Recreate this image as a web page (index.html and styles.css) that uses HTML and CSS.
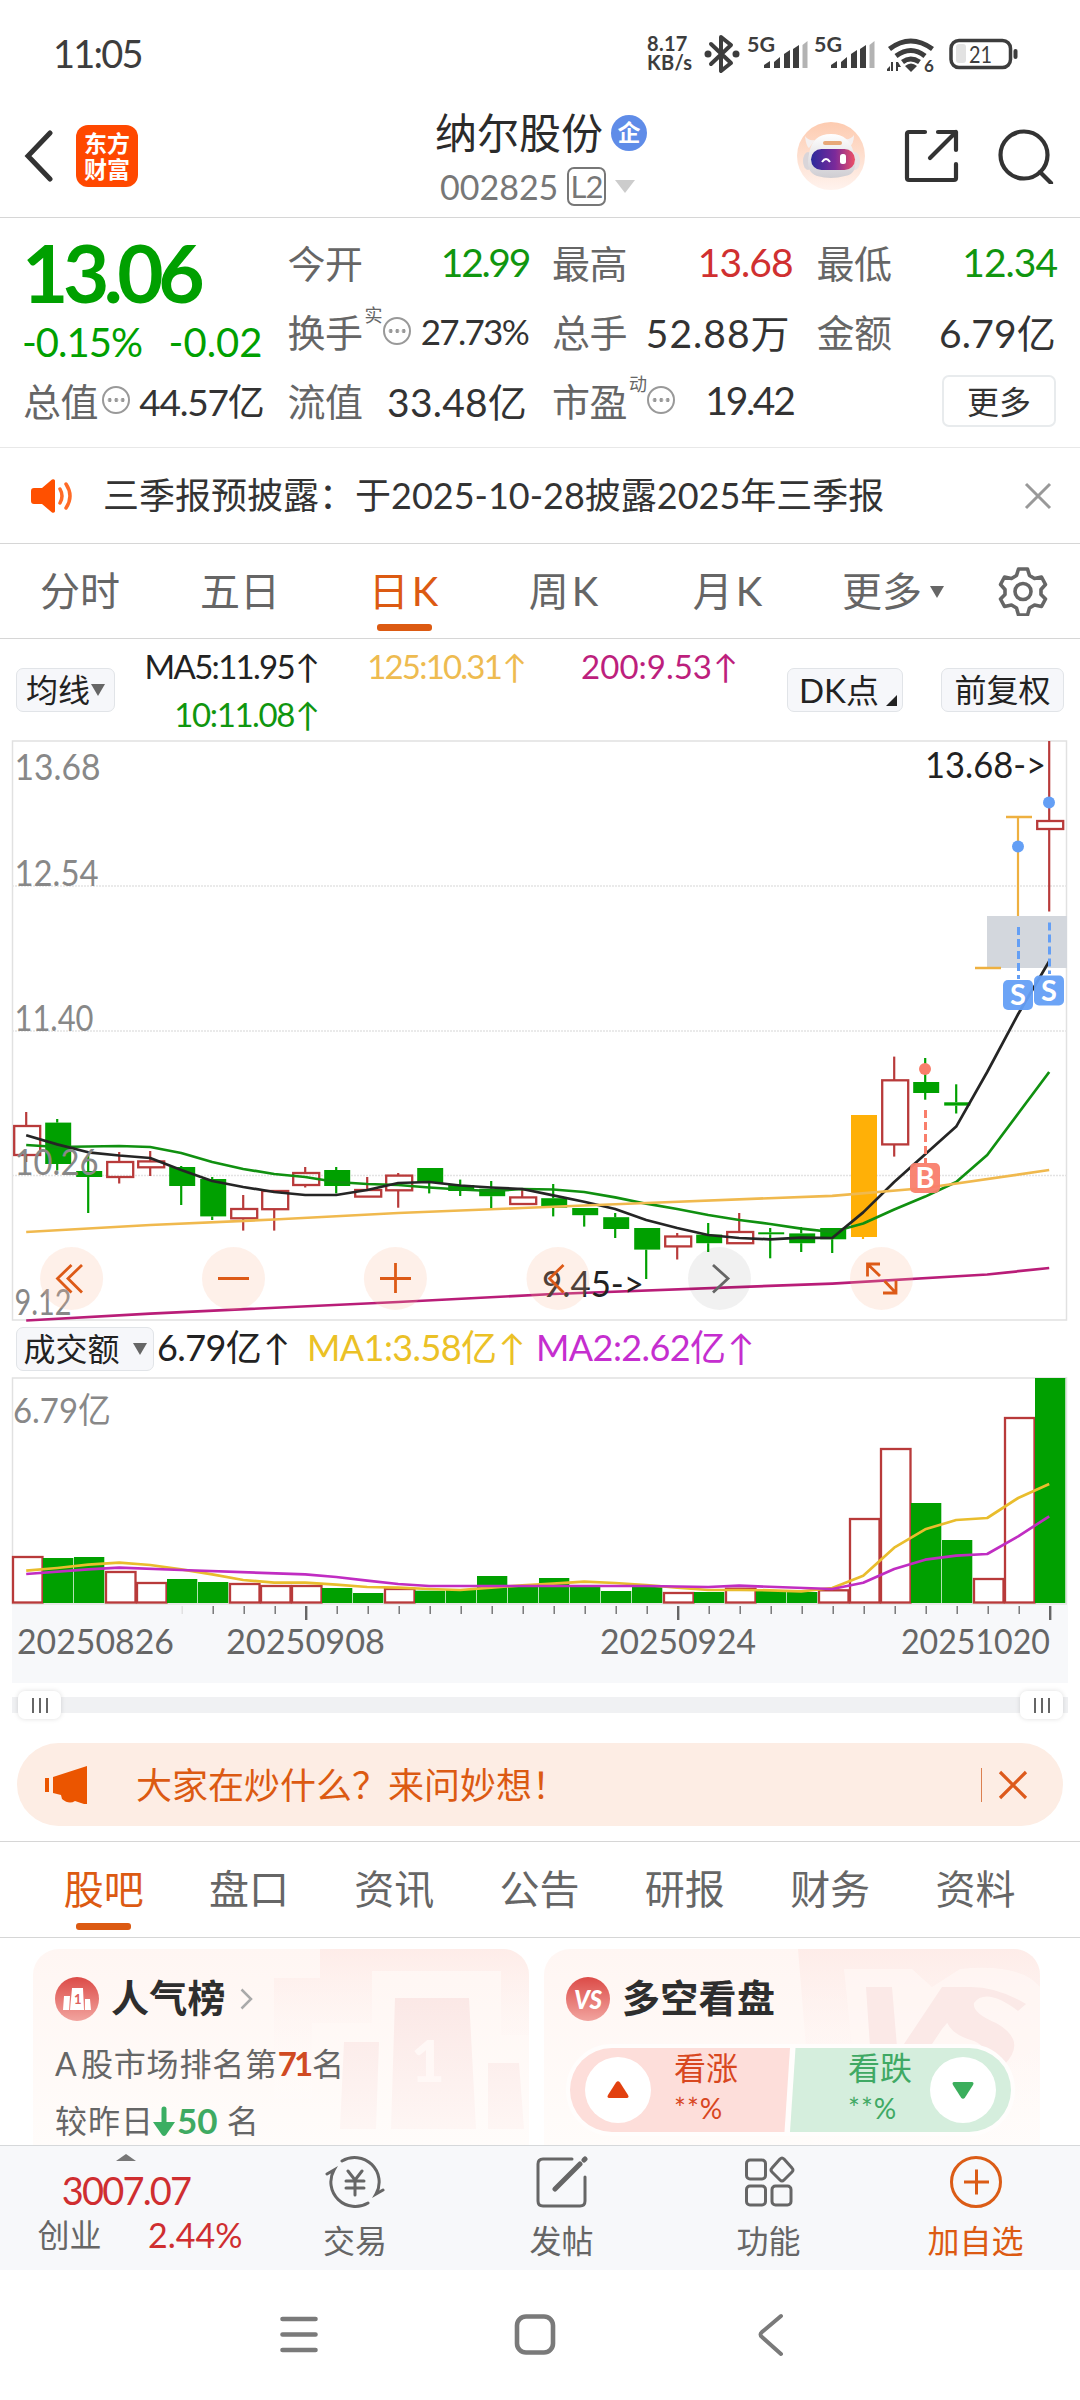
FILE: index.html
```html
<!DOCTYPE html>
<html lang="zh-CN">
<head>
<meta charset="utf-8">
<title>纳尔股份 002825</title>
<link rel="stylesheet" href="styles.css">
</head>
<body>
<div class="statusbar">
  <span class="clock">11:05</span>
  <div class="status-icons">
    <div class="speed"><span>8.17</span><span>KB/s</span></div>
    <svg class="status-svg" width="330" height="60" viewBox="700 20 330 60">
      <g fill="none" stroke="#3d3d3d" stroke-width="4" stroke-linejoin="round" stroke-linecap="round">
        <path d="M711 44l20 19-10 8V37l10 8-20 19"/>
        <rect x="951" y="40.500" width="59.500" height="27" rx="8" stroke-width="3.500"/>
        <path d="M1015.500 51v6"/>
      </g>
      <g fill="#3d3d3d">
        <circle cx="708" cy="54" r="3.500"/><circle cx="736" cy="54" r="3.500"/>
        <path d="M764 68v-3l6-4v7zM774 68V62l6-5v11zM784 68V54l6-4v18zM793 68V49l6-4v23z"/>
        <path d="M831 68v-3l6-4v7zM841 68V62l6-5v11zM851 68V54l6-4v18zM860 68V49l6-4v23z"/>
        <path d="M905 66q6-5 12 0l-6 6z"/>
        <path d="M890 66v5h-3v-2zM891 62h2v9h-2zM896 62h2v9h-2zM898 62l3 5h-3z"/>
      </g>
      <path d="M802.500 68V45l5-4v27zM869.500 68V45l5-4v27z" fill="#b3b3b3"/>
      <g fill="none" stroke="#3d3d3d" stroke-width="5">
        <path d="M889.500 49q21-16 43 0M896 56q15-11 29 0M902.500 62q8-6 17 0"/>
      </g>
      <rect x="956" y="44" width="10" height="19" rx="3" fill="#e2e2e2"/>
      <g fill="#3d3d3d" font-weight="700">
        <text x="747" y="52" font-size="21" textLength="28" lengthAdjust="spacingAndGlyphs">5G</text>
        <text x="814" y="52" font-size="21" textLength="28" lengthAdjust="spacingAndGlyphs">5G</text>
        <text x="924" y="72" font-size="17">6</text>
        <text x="969" y="63" font-size="23" font-weight="400" textLength="23" lengthAdjust="spacingAndGlyphs">21</text>
      </g>
    </svg>
  </div>
</div>

<header class="header">
  <div class="header-left">
    <svg width="30" height="52" viewBox="0 0 30 52"><path d="M26 3L4 26l22 23" fill="none" stroke="#333" stroke-width="5" stroke-linecap="round"/></svg>
    <div class="logo"><span>东方</span><span>财富</span></div>
  </div>
  <div class="header-title">
    <div class="stock-name">纳尔股份<span class="badge-qi">企</span></div>
    <div class="stock-code"><span class="code">002825</span><span class="l2">L2</span><i class="tri-down light"></i></div>
  </div>
  <div class="header-right">
    <svg width="68" height="68" viewBox="0 0 68 68">
      <defs>
        <linearGradient id="peach" x1="0" y1="0" x2="0" y2="1"><stop offset="0" stop-color="#fdcbb0"/><stop offset="1" stop-color="#fff3ee"/></linearGradient>
        <linearGradient id="visor" x1="0" y1="0" x2="1" y2="0"><stop offset="0" stop-color="#2b2a9c"/><stop offset=".55" stop-color="#7c2a9a"/><stop offset="1" stop-color="#ee4f66"/></linearGradient>
        <linearGradient id="shell" x1="0" y1="0" x2="0" y2="1"><stop offset="0" stop-color="#fff"/><stop offset="1" stop-color="#cfcdd2"/></linearGradient>
      </defs>
      <circle cx="34" cy="34" r="34" fill="url(#peach)"/>
      <path d="M8 14q1 10 4 12l6-8q-7 1-10-4zM57 13q0 9-5 12l-5-8q7 1 10-4z" fill="#f5f0f0"/>
      <ellipse cx="11" cy="39" rx="5" ry="9" fill="#d9d5d9"/><ellipse cx="58" cy="39" rx="5" ry="9" fill="#e9e1e3"/>
      <path d="M12 32q3-20 22-20t23 20q5 20-9 22-14 4-28 0-12-4-8-22z" fill="url(#shell)"/>
      <rect x="26" y="19" width="19" height="4" rx="2" fill="#e8a878"/>
      <rect x="14" y="27" width="44" height="21" rx="10.500" fill="url(#visor)"/>
      <path d="M25 40q4-6 8 0" fill="none" stroke="#fff" stroke-width="2"/><rect x="43" y="32" width="6" height="10" rx="2.500" fill="#fff"/>
    </svg>
    <svg width="56" height="56" viewBox="0 0 56 56" fill="none" stroke="#333" stroke-width="4.200" stroke-linecap="round" stroke-linejoin="round"><path d="M22 4H6q-2 0-2 2v44q0 2 2 2h45q2 0 2-2V36M35 4h18v18M53 4L27 30"/></svg>
    <svg width="56" height="56" viewBox="0 0 56 56" fill="none" stroke="#333" stroke-width="4.200" stroke-linecap="round"><circle cx="26" cy="27" r="23.500"/><path d="M42 44l11 11"/></svg>
  </div>
</header>

<section class="quote">
  <div class="price-block">
    <div class="price">13.06</div>
    <div class="change"><span>-0.15%</span><span>-0.02</span></div>
  </div>
  <div class="cell"><label>今开</label><b class="down tight">12.99</b></div>
  <div class="cell"><label>最高</label><b class="rise">13.68</b></div>
  <div class="cell"><label>最低</label><b class="down">12.34</b></div>
  <div class="cell"><label>换手<sup>实</sup><i class="dots"></i></label><b class="small">27.73%</b></div>
  <div class="cell"><label>总手</label><b class="wide">52.88万</b></div>
  <div class="cell"><label>金额</label><b class="loose">6.79亿</b></div>
  <div class="cell"><label>总值<i class="dots near"></i></label><b class="mid">44.57亿</b></div>
  <div class="cell"><label>流值</label><b class="loose">33.48亿</b></div>
  <div class="cell"><label>市盈<sup>动</sup><i class="dots"></i></label><b class="tight">19.42</b></div>
  <div class="cell end"><button class="more">更多</button></div>
</section>

<section class="notice">
  <svg width="44" height="36" viewBox="0 0 44 36"><path d="M3 10h8L21 1.500q2-1 3 1v31q-1 2-3 1L11 26H3q-3 0-3-3V13q0-3 3-3z" fill="#ff5000"/><path d="M29 11q4 7 0 14M35 6q8 12 0 24" fill="none" stroke="#ff6a26" stroke-width="3.500" stroke-linecap="round"/></svg>
  <p>三季报预披露：于2025-10-28披露2025年三季报</p>
  <svg width="28" height="28" viewBox="0 0 28 28"><path d="M2 2l24 24M26 2L2 26" stroke="#999" stroke-width="3"/></svg>
</section>

<nav class="periods">
  <span>分时</span><span>五日</span><span class="active k">日K</span><span class="k">周K</span><span class="k">月K</span><span class="more-tab">更多<i class="tri-down dark"></i></span>
  <svg width="50" height="50" viewBox="0 0 50 50" fill="none" stroke="#666" stroke-width="3.600" stroke-linejoin="round"><path d="M20.500 3h9l2 6.500 5 3 7-1.500 4 7.500-4.500 5v5l4.500 4.500-4 7.500-7-1.500-5 3-2 7h-9l-2-7-5-3-7 1.500-4-7.500L7 28.500v-5L2.500 18.500l4-7.500 7 1.500 5-3z"/><circle cx="25" cy="25.500" r="8"/></svg>
</nav>

<section class="ma-row">
  <button class="chip avg">均线<i class="tri-down dark"></i></button>
  <div class="ma-grid">
    <span class="c-black">MA5:11.95<i class="up">↑</i></span><span class="c-gold">125:10.31<i class="up">↑</i></span><span class="c-magenta">200:9.53<i class="up">↑</i></span>
    <span class="c-green">10:11.08<i class="up">↑</i></span>
  </div>
  <button class="chip dk">DK点<i class="corner"></i></button>
  <button class="chip fq">前复权</button>
</section>

<svg class="chart" id="kline" width="1080" height="582" viewBox="0 740 1080 582"></svg>

<section class="vol-row">
  <button class="chip vol">成交额<i class="tri-down dark"></i></button>
  <span class="v1">6.79亿<i class="up">↑</i></span><span class="v2">MA1:3.58亿<i class="up">↑</i></span><span class="v3">MA2:2.62亿<i class="up">↑</i></span>
</section>

<svg class="chart" id="volume" width="1080" height="308" viewBox="0 1376 1080 308"></svg>

<div class="slider"><div class="handle"><i></i><i></i><i></i></div><div class="handle"><i></i><i></i><i></i></div></div>

<section class="banner">
  <svg width="44" height="38" viewBox="0 0 44 38" fill="#eb5500"><path d="M0 12h4v14H0zM8 11L42 0v38h-3l-9-3q-6 4-13-2l-1-4-8-2z"/></svg>
  <p>大家在炒什么？来问妙想！</p>
  <i class="bar"></i>
  <svg width="30" height="30" viewBox="0 0 30 30"><path d="M2 2l26 26M28 2L2 28" stroke="#dd5a1c" stroke-width="3.200"/></svg>
</section>

<nav class="sections"><span class="active">股吧</span><span>盘口</span><span>资讯</span><span>公告</span><span>研报</span><span>财务</span><span>资料</span></nav>

<main class="cards">
  <article class="card">
    <svg class="card-art" width="496" height="196" viewBox="0 0 496 196">
      <defs>
        <linearGradient id="tint" x1="0" y1="0" x2="0" y2="1"><stop offset="0" stop-color="#fde6e2" stop-opacity=".6"/><stop offset="1" stop-color="#fff" stop-opacity=".1"/></linearGradient>
        <linearGradient id="block" x1="0" y1="0" x2="0" y2="1"><stop offset="0" stop-color="#fbe8e6"/><stop offset="1" stop-color="#fef6f4"/></linearGradient>
        <linearGradient id="red" x1="0" y1="0" x2="0" y2="1"><stop offset="0" stop-color="#dc4b47"/><stop offset="1" stop-color="#f2a49f"/></linearGradient>
      </defs>
      <path d="M241 150V29h46V0h209v86h-28V22H339v52h-60v76z" fill="url(#tint)"/>
      <path d="M311 93h35l-3 87h-36zM362 49h74l7 131h-85zM455 114h31l5 66h-36z" fill="url(#block)"/>
      <text x="378" y="133" font-size="58" font-weight="900" fill="#fff8f6">1</text>
    </svg>
    <h2><svg width="44" height="44" viewBox="0 0 44 44"><circle cx="22" cy="22" r="22" fill="url(#red)"/><path d="M9 19h6l-1 14H8zM17 11h11l1 22H15zM30 22h5l1 11h-6z" fill="#fff"/><text x="19" y="27" font-size="13" font-weight="700" fill="#dd615c">1</text></svg><span>人气榜</span><svg class="chev" width="13" height="22" viewBox="0 0 13 22"><path d="M1.500 1.500L11 11l-9.500 9.500" fill="none" stroke="#aaa" stroke-width="2.500"/></svg></h2>
    <p class="rank"><span class="latin-a">A</span>股市场排名第<b>71</b>名</p>
    <p class="shift">较昨日<svg width="22" height="30" viewBox="0 0 22 30"><path d="M11 3v16" stroke="#3bae63" stroke-width="5" stroke-linecap="round"/><path d="M0 16h22L13 29q-2 2-4 0z" fill="#3bae63"/></svg><b>50</b> 名</p>
  </article>
  <article class="card">
    <svg class="card-art" width="496" height="196" viewBox="0 0 496 196">
      <path d="M254 0H496V196H270z" fill="url(#tint)"/>
      <path d="M300 20h68l20 18 28-18q60-6 80 18v60l-80 40H312z" fill="#fff7f4" opacity=".75"/>
      <path d="M322 38h26l5 60H326zM358 98l40-60h28l-6 16-22 26-12 18z" fill="#fbe9e7"/>
      <path d="M482 55q-30-18-58-17-25 6-22 32 3 15 28 22 14 6 6 14-10 8-30 0l-10 20q40 10 64-10 24-24-8-42-24-10-22-20 12-16 44 8z" fill="#fbe9e7"/>
    </svg>
    <h2><svg width="44" height="44" viewBox="0 0 44 44"><circle cx="22" cy="22" r="22" fill="url(#red)"/><text x="8" y="32" font-size="26" font-weight="900" font-style="italic" fill="#fff" textLength="28" lengthAdjust="spacingAndGlyphs">VS</text></svg><span>多空看盘</span></h2>
    <div class="vote">
      <div class="bull"><span class="knob"><svg width="22" height="18" viewBox="0 0 22 18"><path d="M9 1.500q2-2.500 4 0l8 12.500q1.500 3-1.500 3h-17q-3 0-1.500-3z" fill="#e2400f"/></svg></span><div><strong>看涨</strong><em>**%</em></div></div>
      <div class="bear"><div><strong>看跌</strong><em>**%</em></div><span class="knob"><svg width="22" height="18" viewBox="0 0 22 18"><path d="M9 16.500q2 2.500 4 0l8-12.500q1.500-3-1.500-3h-17q-3 0-1.500 3z" fill="#3bae5c"/></svg></span></div>
    </div>
  </article>
</main>

<footer class="toolbar">
  <div class="index"><i class="tri-up"></i><span class="idx-val">3007.07</span><div class="idx-row"><span>创业</span><span class="pct">2.44%</span></div></div>
  <div class="tool"><svg width="60" height="52" viewBox="0 0 60 52" fill="none" stroke="#666" stroke-width="3" stroke-linecap="round"><path d="M17 5a24.500 24.500 0 0 1 34 33l7-4M43 47A24.500 24.500 0 0 1 9 14l-7 4M23 15l7 9 7-9M30 24v15M21 25h18M21 32h18"/></svg><span>交易</span></div>
  <div class="tool"><svg width="52" height="52" viewBox="0 0 52 52" fill="none" stroke="#666" stroke-width="3" stroke-linecap="round" stroke-linejoin="round"><path d="M36 3H7q-5 0-5 5v37q0 5 5 5h37q5 0 5-5V21"/><path d="M19 33l25-25M48 4l1-1" stroke-width="5"/></svg><span>发帖</span></div>
  <div class="tool"><svg width="52" height="52" viewBox="0 0 52 52" fill="none" stroke="#666" stroke-width="3" stroke-linejoin="round"><rect x="3.500" y="4" width="19" height="19" rx="3.500"/><rect x="3.500" y="30" width="19" height="19" rx="3.500"/><rect x="29" y="30" width="19" height="19" rx="3.500"/><path d="M37 3q2-2 4 0l8 9q2 2 0 4l-8 8q-2 2-4 0l-8-8q-2-2 0-4z"/></svg><span>功能</span></div>
  <div class="tool add"><svg width="54" height="54" viewBox="0 0 54 54" fill="none" stroke="#db5c16" stroke-width="3"><circle cx="27" cy="27" r="24.500"/><path d="M15 27h25M27.500 14.500v25"/></svg><span>加自选</span></div>
</footer>

<div class="sysnav">
  <svg width="38" height="44" viewBox="0 0 38 44"><path d="M2.500 6h33M2.500 21.500h33M2.500 37h33" stroke="#7a7a7a" stroke-width="4.600" stroke-linecap="round"/></svg>
  <svg width="42" height="44" viewBox="0 0 42 44"><rect x="3" y="3.500" width="36" height="36" rx="9" fill="none" stroke="#7a7a7a" stroke-width="4.600"/></svg>
  <svg width="26" height="44" viewBox="0 0 26 44"><path d="M23 3L4 19q-3 2.500 0 5l19 17" fill="none" stroke="#7a7a7a" stroke-width="4" stroke-linecap="round"/></svg>
</div>
<script src="chart.js"></script>
</body>
</html>
```
FILE: styles.css
```css
* { box-sizing: border-box; }
body {
  margin: 0;
  width: 1080px;
  height: 2400px;
  overflow: hidden;
  background: #fff;
  color: #333;
  font-family: Lato, "Noto Sans CJK SC", sans-serif;
}
svg { display: block; flex: none; }
.chart { overflow: visible; }
svg text { font-family: Lato, "Noto Sans CJK SC", sans-serif; }
i, em { font-style: normal; }
p, h2 { margin: 0; }
button { font-family: inherit; padding: 0; white-space: nowrap; }

.tri-down { display: inline-block; border-left: 7px solid transparent; border-right: 7px solid transparent; border-top: 12px solid #666; }
.tri-down.light { border-left-width: 10px; border-right-width: 10px; border-top: 13px solid #ccc; margin-left: 9px; }
.tri-up { border-left: 10px solid transparent; border-right: 10px solid transparent; border-bottom: 7px solid #777; }

/* status bar */
.statusbar { height: 88px; padding: 20px 50px 0 53px; display: flex; justify-content: space-between; }
.clock { font-size: 38px; line-height: 67px; letter-spacing: -1.8px; color: #3d3d3d; }
.status-icons { display: flex; }
.speed { width: 53px; padding-top: 14px; display: flex; flex-direction: column; font-size: 20px; line-height: 19px; font-weight: 700; color: #3d3d3d; letter-spacing: .3px; }

/* header */
.header { height: 130px; border-bottom: 1px solid #d6d6d6; display: grid; grid-template-columns: 360px 360px 360px; }
.header-left { display: flex; align-items: center; padding: 6px 0 0 24px; gap: 22px; }
.logo { width: 62px; height: 62px; border-radius: 12px; background: #ff4800; color: #fff; display: flex; flex-direction: column; align-items: center; justify-content: center; font-size: 23px; line-height: 26px; font-weight: 700; }
.header-title { padding: 18px 0 0 75px; }
.stock-name { display: flex; align-items: center; height: 54px; font-size: 42px; line-height: 54px; white-space: nowrap; color: #2b2b2b; }
.badge-qi { margin-left: 8px; width: 36px; height: 36px; border-radius: 50%; background: #5f8ce8; color: #fff; font-size: 23px; line-height: 35px; text-align: center; font-weight: 700; }
.stock-code { display: flex; align-items: center; height: 52px; padding-left: 5px; color: #777; font-size: 34px; }
.code { width: 127px; }
.l2 { width: 39px; height: 39px; border: 2px solid #777; border-radius: 7px; font-size: 31px; line-height: 34px; text-align: center; letter-spacing: -1px; }
.header-right { display: flex; align-items: center; padding: 6px 0 0 77px; gap: 38px; }
.header-right svg:last-child { margin-left: 1px; }

/* quote */
.quote { height: 230px; border-bottom: 1px solid #e8e8e8; padding: 9px 23px 0 23px; display: grid; grid-template-columns: repeat(4, 239.500px); grid-template-rows: repeat(3, 69px); column-gap: 25px; }
.price-block { grid-row: span 2; color: #00a000; }
.price { margin-top: 5px; height: 81px; font-size: 80px; line-height: 80px; font-weight: 700; letter-spacing: -5.500px; margin-left: -1px; }
.change { display: flex; justify-content: space-between; height: 58px; line-height: 58px; font-size: 40px; letter-spacing: -1px; }
.change span:first-child { margin-left: -1px; }
.change span:last-child { letter-spacing: 0; }
.cell { display: flex; align-items: center; justify-content: space-between; font-size: 38px; white-space: nowrap; }
.cell.end { justify-content: flex-end; padding-top: 3px; }
.cell label { color: #666; position: relative; display: flex; align-items: center; height: 69px; letter-spacing: -.5px; }
.cell b { font-weight: 400; font-size: 39px; letter-spacing: -1px; margin-right: -1px; }
.cell .down { color: #10960f; }
.cell .rise { color: #d03030; }
.cell b.tight { letter-spacing: -2.300px; margin-right: -2px; }
.cell b.loose { letter-spacing: .2px; margin-right: 0; }
.cell b.wide { letter-spacing: 1px; margin-right: 1px; }
.cell b.small { font-size: 35px; letter-spacing: -1.700px; }
.cell b.mid { font-size: 37px; letter-spacing: -1.200px; }
.cell sup { position: absolute; left: 77px; top: 4px; font-size: 18px; line-height: 30px; }
.dots { width: 28px; height: 28px; margin-left: 20px; border: 2px solid #999; border-radius: 50%; background: radial-gradient(circle 2px, #999 90%, transparent) 2.500px 0 / 6.500px 24px; background-repeat: repeat-x; background-clip: content-box; padding: 0 2px; }
.dots.near { margin-left: 4px; }
.more { width: 114px; height: 52px; border: 2px solid #e8ebed; border-radius: 7px; background: #fff; font-size: 32px; line-height: 45px; color: #333; }

/* notice */
.notice { height: 96px; border-bottom: 1px solid #d6d6d6; display: flex; align-items: center; padding: 0 28px 0 31px; }
.notice p { flex: 1; margin: -5px 0 0 28px; font-size: 36px; white-space: nowrap; }

/* period tabs */
.periods { height: 95px; border-bottom: 1px solid #d6d6d6; display: grid; grid-template-columns: 160px 160px 170px 150px 178px 150px 112px; align-items: center; font-size: 40px; color: #666; text-align: center; }
.periods span { line-height: 94px; position: relative; }
.periods .k { letter-spacing: 3px; }
.periods .active, .sections .active { color: #dc5a12; }
.periods .active::after, .sections .active::after { content: ""; position: absolute; left: 50%; margin-left: -28px; bottom: 7px; width: 55px; height: 7px; border-radius: 3px; background: #dc5a12; }
.periods .tri-down { vertical-align: 8px; margin-left: 8px; }
.periods svg { margin-left: 30px; }

/* moving averages */
.chip { background: #f6f7fa; border: 1.500px solid #e1e4e8; border-radius: 7px; height: 44px; font-size: 33px; line-height: 38px; color: #222; display: flex; align-items: center; justify-content: center; }
.ma-row { height: 101px; display: flex; align-items: center; padding: 0 16px 0; }
.avg { width: 99px; gap: 1px; font-size: 32px; }
.ma-grid { display: grid; grid-template-columns: 205px 207px 211px; grid-template-rows: 48px 48px; text-align: right; font-size: 33px; line-height: 48px; white-space: nowrap; margin: 1px 49px 0 0; }
.up { display: inline-block; width: 21px; text-indent: -6px; letter-spacing: 0; margin-left: 5px; }
.c-black { color: #222; letter-spacing: -1.700px; } .c-gold { color: #eebb50; letter-spacing: -1.800px; } .c-magenta { color: #bd1f7d; } .c-green { color: #10960f; letter-spacing: -1.400px; }
.dk { width: 116px; position: relative; padding-right: 12px; }
.corner { position: absolute; right: 5px; bottom: 5px; border-left: 11px solid transparent; border-bottom: 11px solid #222; }
.fq { width: 123px; margin-left: 38px; font-size: 32px; }

/* volume legend */
.vol-row { height: 54px; display: flex; align-items: center; padding: 0 0 1px 16px; font-size: 36px; white-space: nowrap; letter-spacing: -.6px; }
.vol { width: 138px; font-size: 32px; letter-spacing: 0; gap: 13px; }
.v1 { color: #222; margin-left: 3px; width: 150px; }
.v2 { color: #ebc126; width: 229px; }
.v3 { color: #c52ecf; }
.vol-row span { line-height: 50px; margin-top: -3px; }
.vol-row .up { margin-left: 10px; text-indent: -8px; }

/* range slider */
.slider { margin: 5px 12px 0; height: 32px; display: flex; align-items: center; justify-content: space-between; padding: 0 5px 0 6px; background: linear-gradient(#f0f1f3, #f0f1f3) 0 8px / 100% 16px no-repeat; }
.handle { width: 43px; height: 28px; border-radius: 7px; background: #fff; box-shadow: 0 0 5px #0002; display: flex; align-items: center; justify-content: center; gap: 5px; }
.handle i { width: 2px; height: 15px; background: #666; }

/* banner */
.banner { margin: 22px 17px 0; height: 83px; border-radius: 42px; background: #fdede4; display: flex; align-items: center; padding: 0 35px 0 28px; color: #dc5a12; }
.banner p { flex: 1; margin: -4px 0 0 47px; font-size: 36px; }
.banner .bar { width: 1.500px; height: 34px; background: #dc8050; margin-right: 16px; }

/* section tabs */
.sections { margin-top: 15px; height: 97px; border-top: 1px solid #d6d6d6; border-bottom: 1px solid #d6d6d6; display: grid; grid-template-columns: repeat(7, 145.300px); padding-left: 31px; text-align: center; font-size: 40px; line-height: 95px; color: #666; }
.sections span { position: relative; }

/* cards */
.cards { height: 207px; overflow: hidden; padding: 11px 0 0 33px; display: flex; gap: 15px; }
.card { width: 496px; height: 240px; border-radius: 26px; background: linear-gradient(#fff6f3, #fffcfa 196px); position: relative; overflow: hidden; padding: 22px 0 0 22px; }
.card > * { position: relative; }
.card .card-art { position: absolute; left: 0; top: 0; }
.card h2 { display: flex; align-items: center; height: 56px; font-size: 38px; font-weight: 700; color: #2e2e2e; }
.card h2 svg:first-child { margin-right: 12px; }
.card h2 span { line-height: 50px; margin-top: -4px; letter-spacing: .3px; }
.card .chev { margin-left: 14px; }
.rank, .shift { font-size: 32px; color: #666; height: 57px; line-height: 57px; display: flex; align-items: center; white-space: pre; letter-spacing: 1px; }
.rank { margin-top: 8px; letter-spacing: .8px; }
.latin-a { width: 26px; }
.rank b { color: #d04a22; font-size: 33px; letter-spacing: -3px; margin: 0 2px 0 0; }
.shift svg { margin: 0 2px 0 -1px; }
.shift b { color: #3faa62; font-size: 35px; letter-spacing: 0; }
.vote { margin: 17px 0 0 0; width: 449px; height: 92px; border: 4px solid #fffdfc; border-radius: 46px; overflow: hidden; background: #fffdfc; display: flex; justify-content: space-between; }
.bull, .bear { display: flex; align-items: center; height: 84px; }
.bull { width: 221px; padding-left: 15px; gap: 23px; background: #fddeda; color: #d8471f; clip-path: polygon(0 0, 100% 0, 97.500% 100%, 0 100%); }
.bear { width: 222px; padding-right: 15px; justify-content: flex-end; gap: 18px; background: #d5eedd; color: #3fa964; clip-path: polygon(2.500% 0, 100% 0, 100% 100%, 0 100%); }
.knob { width: 66px; height: 66px; border-radius: 50%; background: #fff; display: flex; align-items: center; justify-content: center; }
.vote strong { display: block; font-weight: 400; font-size: 32px; line-height: 40px; margin-top: -5px; }
.vote em { display: block; font-size: 28px; line-height: 40px; letter-spacing: 1px; }

/* toolbar */
.toolbar { height: 125px; border-top: 1px solid #d6d8da; background: #f7f8fa; display: grid; grid-template-columns: 252px 206px 207px 207px 207px; }
.index { display: flex; flex-direction: column; align-items: center; padding-top: 8px; }
.idx-val { color: #cf2e30; font-size: 38px; line-height: 58px; height: 50px; letter-spacing: -1.800px; }
.idx-row { width: 205px; display: flex; justify-content: space-between; font-size: 32px; line-height: 48px; color: #666; margin: 0 0 0 28px; }
.pct { color: #cf2e30; font-size: 34px; letter-spacing: 0; margin-right: 0; }
.tool { display: flex; flex-direction: column; align-items: center; padding-top: 9px; font-size: 32px; color: #666; }
.tool svg { height: 54px; }
.tool span { line-height: 46px; margin-top: 9px; }
.tool.add { color: #dc5a12; }

/* system navigation */
.sysnav { height: 130px; display: grid; grid-template-columns: 38px 42px 26px; column-gap: 196px; padding: 43px 0 0 280px; }
.sysnav svg:last-child { margin-left: 6px; }
```
FILE: chart.js
```js
const NS = 'http://www.w3.org/2000/svg';
const RED = '#b83a3a', GREEN = '#00a000', GOLD = '#ffb007', BLUE = '#649ff5', CORAL = '#f97e6b';

function add(parent, tag, attrs, text) {
  const node = document.createElementNS(NS, tag);
  for (const key in attrs) node.setAttribute(key, attrs[key]);
  if (text) node.textContent = text;
  parent.appendChild(node);
  return node;
}
const line = (p, x1, y1, x2, y2, color, width = 2.2, extra = {}) =>
  add(p, 'line', { x1, y1, x2, y2, stroke: color, 'stroke-width': width, ...extra });
const rect = (p, x, y, width, height, fill, extra = {}) =>
  add(p, 'rect', { x, y, width, height, fill, ...extra });
const label = (p, x, y, size, length, fill, text) =>
  add(p, 'text', { x, y, 'font-size': size, fill, textLength: length, lengthAdjust: 'spacingAndGlyphs' }, text);
const curve = (p, points, color, width = 2.7) =>
  add(p, 'polyline', { points: points.map(q => q.join(',')).join(' '), fill: 'none', stroke: color, 'stroke-width': width, 'stroke-linejoin': 'round' });
const slot = i => 26.2 + 31 * i;
const daily = ys => ys.map((y, i) => [slot(i), y]);

/* ---- candlesticks: [hollow?, high, bodyTop, bodyBottom, low] ---- */
const k = document.getElementById('kline');
rect(k, 12.5, 741, 1054, 579, 'none', { stroke: '#e1e1e1', 'stroke-width': 1.5 });
[886, 1031, 1175.5].forEach(y => line(k, 12, y, 1067, y, '#e3e3e3', 1.5, { 'stroke-dasharray': '2 1' }));
rect(k, 987, 916, 80, 52, '#d3d7dd');

const candles = [
  [1,1112,1126,1155,1162],[0,1119,1122.6,1164,1170.5],[0,1155,1171,1177,1213],[1,1152,1162,1177,1183.5],[1,1151,1161.4,1167.3,1176],
  [0,1166,1167,1186,1205],[0,1177,1179,1216.4,1220],[1,1195,1209,1218.3,1230.6],[1,1191,1191,1209.2,1230.6],[1,1167,1173,1185,1187.5],
  [0,1167,1170,1186,1193.4],[1,1177,1190,1196.6,1197],[1,1173,1175.6,1190.3,1207.7],[0,1168,1168,1183,1193.4],[0,1179.6,1185,1191,1196],
  [0,1181,1188.7,1196.2,1208],[1,1188,1197.4,1204,1204],[0,1184,1198.2,1207.7,1216.4],[0,1208,1208,1215.2,1226.6],[0,1213,1217.2,1229,1238],
  [0,1228,1228,1249.6,1279],[1,1233,1236.5,1246.4,1259.5],[0,1223,1234.6,1243.2,1252],[1,1213,1232,1243.2,1243.2],[0,1228,1232.3,1234.3,1258.3],
  [0,1227,1233.4,1243.2,1252],[0,1228,1228,1239.3,1253],null,[1,1056.6,1080.3,1144.4,1156.6],[0,1058,1082,1093,1099.7],
  [0,1084.3,1102.3,1105.6,1113.5],null,null,[1,741,821,829,911.5]
];
candles.forEach((c, i) => {
  if (!c) return;
  const [hollow, high, top, bottom, low] = c, x = slot(i);
  const color = hollow ? RED : GREEN;
  line(k, x, high, x, top, color);
  line(k, x, bottom, x, low, color);
  if (hollow) rect(k, x - 12, top, 26, bottom - top, 'none', { stroke: RED, 'stroke-width': 2.3 });
  else rect(k, x - 12, top, 26, bottom - top, GREEN);
});
/* limit-up days */
rect(k, 851, 1115, 26, 122, GOLD);
line(k, 863, 1237, 863, 1239, GOLD);
line(k, 975, 968, 1001, 968, '#eeb040', 2.5);
line(k, 1006, 817, 1032, 817, '#eeb040', 2.5);
line(k, 1018, 817, 1018, 916, '#eeb040');

curve(k, daily([1145,1147,1146.5,1146,1147,1153,1162,1169,1174,1177,1182,1184,1185,1187.5,1189.5,1191,1189,1189.5,1192,1197.4,1203.7,1209,1215,1220,1224,1228.6,1232,1223.5,1209.6,1196.6,1182,1155,1113.5,1072]), '#109010');
curve(k, daily([1135.3,1144.4,1152.3,1155.5,1158,1170,1181,1187,1192,1195,1195,1190,1183,1182,1185.5,1187.5,1189,1195.4,1201.7,1209,1220,1228,1235,1238,1239.3,1237.7,1238,1212.4,1182,1154.3,1126.6,1072,1014,961.3]), '#252525');
const sparse = pairs => pairs.map(([i, y]) => [slot(i), y]);
curve(k, sparse([[0,1232],[4,1225],[8,1219.5],[12,1213],[16,1208],[20,1203],[26,1195.8],[29,1188],[33,1170]]), '#f0b94e');
curve(k, sparse([[0,1320.5],[4,1313.6],[12,1302],[17,1294],[26,1283.6],[31,1274.5],[33,1268]]), '#b91d78');

/* buy and sell markers */
function marker(x, dotY, from, to, boxY, letter, color) {
  if (dotY) add(k, 'circle', { cx: x, cy: dotY, r: 6, fill: color });
  line(k, x + .5, from, x + .5, to, color, 3, { 'stroke-dasharray': '8 4' });
  rect(k, x - 15, boxY, 30, 30, color, { rx: 5, opacity: .95 });
  add(k, 'text', { x, y: boxY + 25, 'font-size': 29, 'font-weight': 700, fill: '#fff', 'text-anchor': 'middle' }, letter);
}
marker(925, 1069, 1110, 1163, 1163, 'B', CORAL);
marker(1018, 846.5, 927, 979, 980, 'S', BLUE);
marker(1049, 802.5, 922.5, 974, 975.5, 'S', BLUE);

label(k, 925, 778, 36, 121, '#222', '13.68->');
label(k, 542, 1297, 36, 102, '#222', '9.45->');
[['13.68', 780, 86], ['12.54', 886, 84], ['11.40', 1030.5, 79], ['10.26', 1175, 84], ['9.12', 1315, 57]]
  .forEach(([t, y, w]) => label(k, 14.5, y, 36, w, '#888', t));

/* zoom and pan buttons */
[71.6, 233.5, 395.4, 558, 719.5, 881.5].forEach((cx, i) =>
  add(k, 'circle', { cx, cy: 1278.5, r: 31.5, fill: i === 4 ? 'rgba(0,0,0,.055)' : 'rgba(250,185,150,.21)' }));
const icon = (d, color = '#dd5a17') => add(k, 'path', { d, fill: 'none', stroke: color, 'stroke-width': 2.8 });
icon('M71.500 1265L57.500 1278.500l14 14M82 1265l-14 13.500 14 14');
icon('M218 1278.500h31M380 1278.500h31M395.500 1263v30');
icon('M563.500 1265l-14 13.500 14 14');
icon('M713 1265l15 13.500-15 14', '#666');
icon('M880 1264h-12.500v12.500M867.500 1264l12.500 12M883 1293h13v-12.500M896 1293l-11.500-12');

/* ---- turnover bars: [hollow?, top] ---- */
const v = document.getElementById('volume');
rect(v, 12.5, 1378, 1054, 226, 'none', { stroke: '#e1e1e1', 'stroke-width': 1.5 });
rect(v, 12, 1605, 1056, 78, '#f7f8fa');
const bars = [[1,1557],[0,1558],[0,1557],[1,1572],[1,1583],[0,1579],[0,1582],[1,1584],[1,1586],[1,1586],[0,1588],[0,1593],[1,1589],[0,1590.7],[0,1590],[0,1576],[0,1586.7],[0,1578],[0,1587],[0,1591],[0,1587],[1,1593],[0,1592],[1,1588.7],[0,1591],[0,1592],[1,1590.3],[1,1519],[1,1449],[0,1503],[0,1540],[1,1579],[1,1418],[0,1378]];
bars.forEach(([hollow, top], i) => {
  const x = 12.5 + 31 * i;
  if (hollow) rect(v, x + .5, top, 29.5, 1602.5 - top, 'none', { stroke: RED, 'stroke-width': 2.3 });
  else rect(v, x - .5, top, 30.3, 1603 - top, GREEN);
});
curve(v, daily([1570.7,1568,1564.7,1562.7,1565,1569.3,1574.3,1580,1582.7,1582.7,1584.7,1587,1587.7,1589,1590,1587.7,1585.3,1583.7,1581.7,1583,1585,1587.7,1590,1590,1590.3,1591.3,1588,1575.7,1547.7,1529.3,1520,1518,1498,1484]), '#e9bd2d');
curve(v, sparse([[0,1574],[2,1569.3],[3,1567.7],[5,1570],[9,1574.3],[10,1577],[11,1580.7],[12,1584],[13,1586],[20,1586],[22,1587],[23,1585.7],[26,1589],[27,1582.7],[28,1569],[29,1559.7],[30,1555.7],[31,1554],[32,1536.3],[33,1516.3]]), '#c02dc2');
for (let i = 5; i < 34; i++) {
  const major = i % 12 === 9, x = 27.2 + 31 * i;
  line(v, x, 1606, x, major ? 1620 : 1614, i === 5 ? '#ddd' : '#666', major ? 2.4 : 1.3);
}
label(v, 13, 1423, 35, 98, '#888', '6.79亿');
[['20250826', 17, 157], ['20250908', 226, 159], ['20250924', 600, 156], ['20251020', 901, 149]]
  .forEach(([t, x, w]) => label(v, x, 1654, 34, w, '#666', t));
```
